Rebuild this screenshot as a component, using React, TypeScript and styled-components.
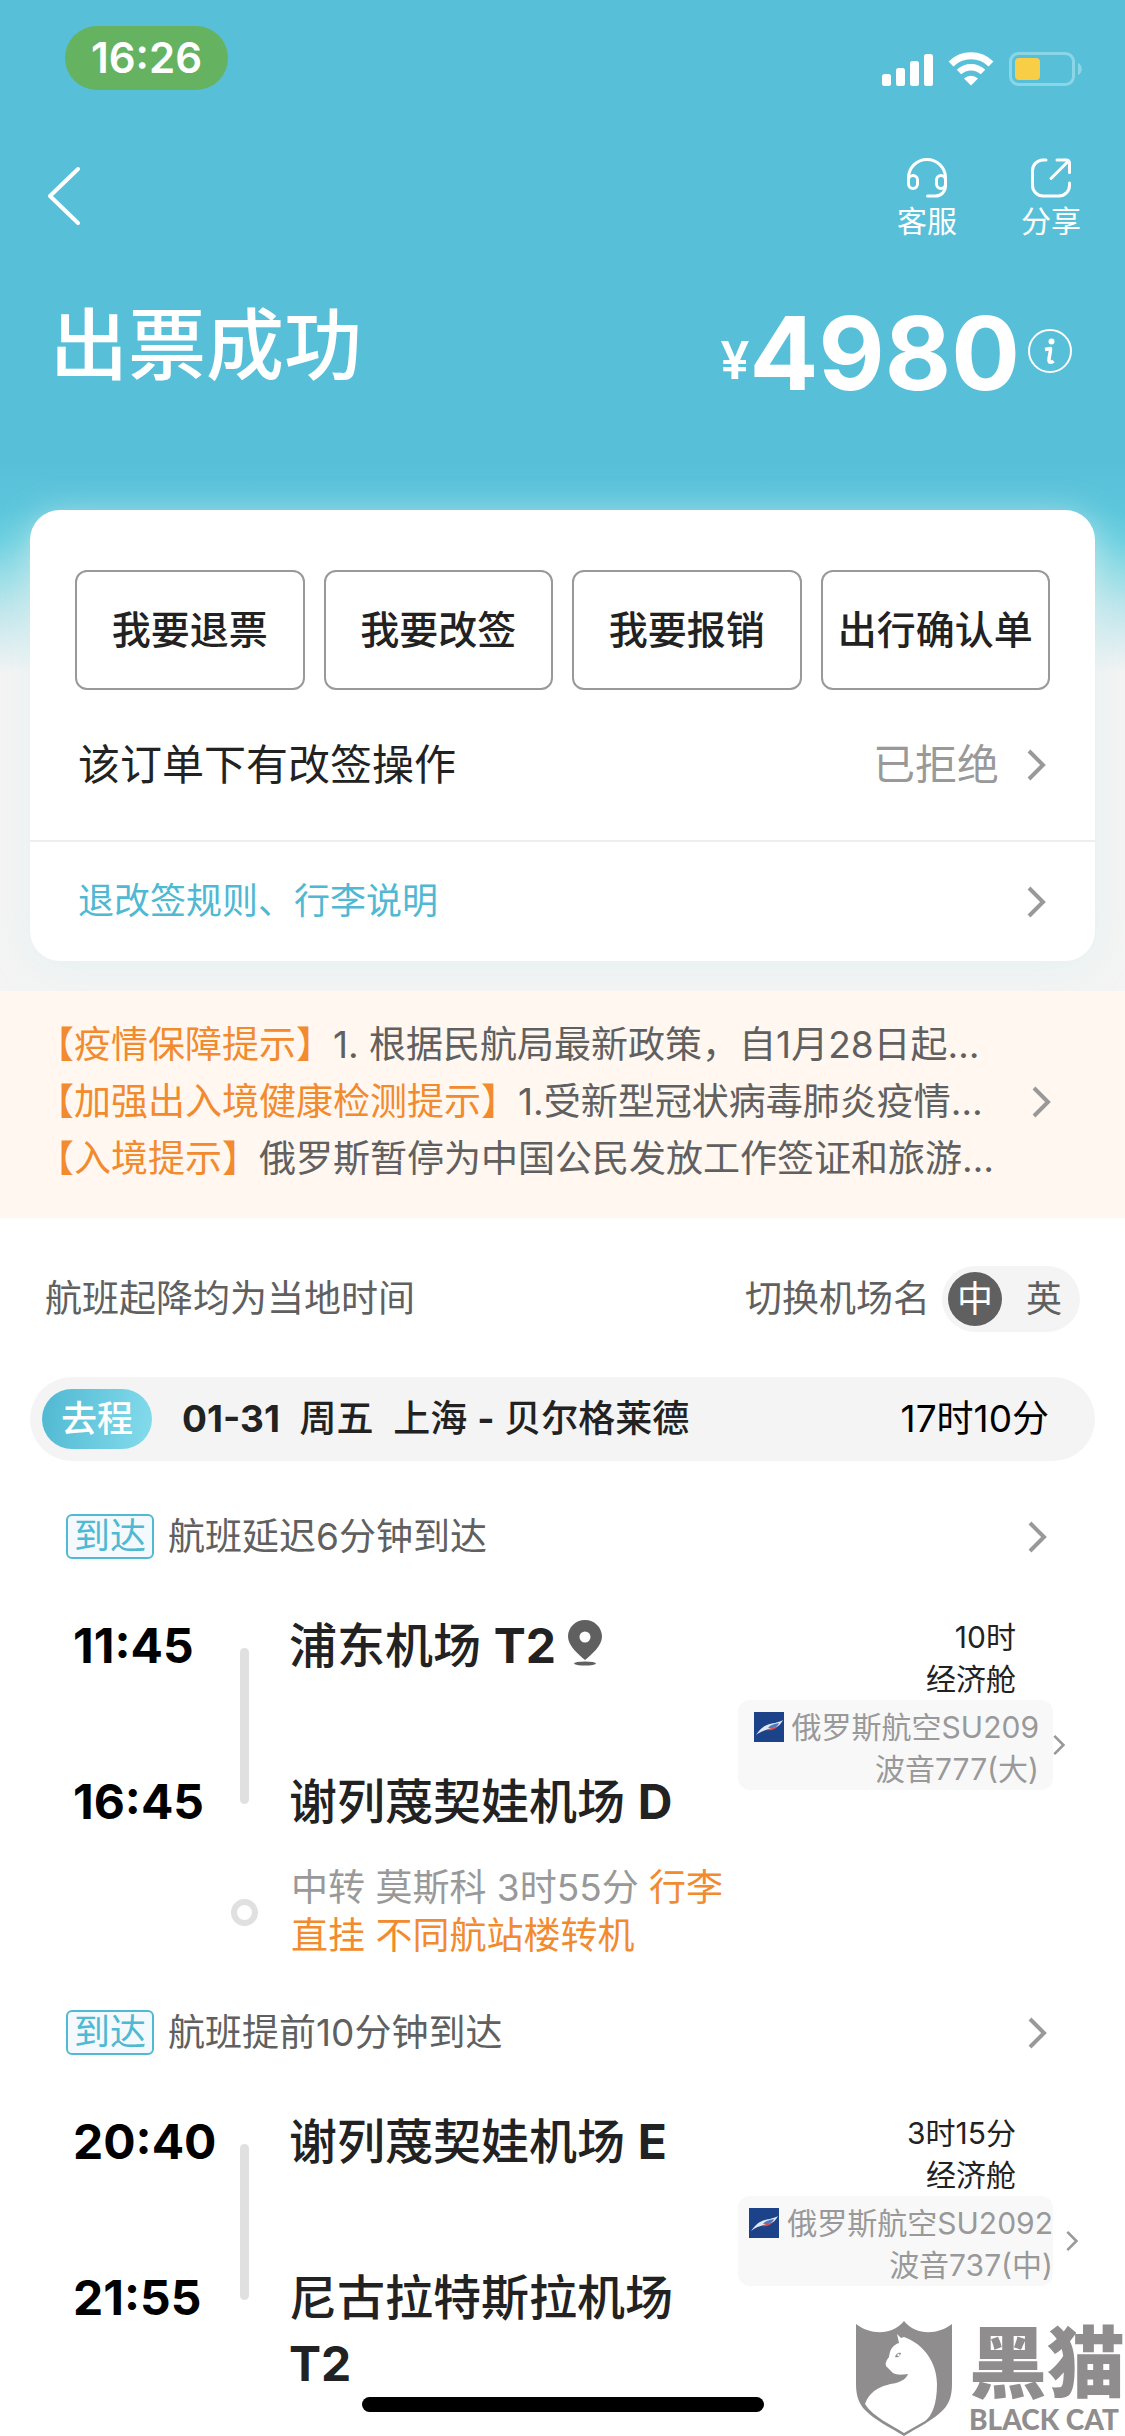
import React, { useState } from 'react';
import styled, { createGlobalStyle } from 'styled-components';

const GlobalStyle = createGlobalStyle`
  *, *::before, *::after { box-sizing: border-box; }
  body {
    margin: 0;
    background: #fff;
    font-family: Inter, "Noto Sans CJK SC", sans-serif;
    line-height: 1.4;
    color: #222;
  }
  h1, h2, p { margin: 0; }
  button {
    margin: 0;
    padding: 0;
    border: 0;
    background: none;
    font: inherit;
    color: inherit;
    text-align: inherit;
    cursor: pointer;
  }
  a { color: inherit; text-decoration: none; }
  svg { display: block; flex: none; }
`;

/* ---------- icons ---------- */

const ChevronSvg = styled.svg<{ $small?: boolean }>`
  width: ${p => (p.$small ? 13 : 20)}px;
  height: ${p => (p.$small ? 22 : 32)}px;
  fill: none;
  stroke: #999;
  stroke-width: 4;
`;

const Chevron = ({ small }: { small?: boolean }) => (
  <ChevronSvg $small={small} viewBox="0 0 20 32" aria-hidden="true">
    <path d="M2 2l14 14L2 30" />
  </ChevronSvg>
);

const SignalIcon = () => (
  <svg width="51" height="32" viewBox="0 0 51 32" fill="#fff" aria-hidden="true">
    <rect x="0" y="20" width="9" height="12" rx="2.5" />
    <rect x="14" y="14" width="9" height="18" rx="2.5" />
    <rect x="28" y="7" width="9" height="25" rx="2.5" />
    <rect x="42" y="0" width="9" height="32" rx="2.5" />
  </svg>
);

const WifiIcon = () => (
  <svg width="46" height="34" viewBox="0 0 46 34" fill="none" stroke="#fff" aria-hidden="true">
    <path d="M3 12a28.500 28.500 0 0 1 40 0" strokeWidth="7" />
    <path d="M11 20a17.500 17.500 0 0 1 24 0" strokeWidth="6.500" />
    <path d="M16 26.500a10 10 0 0 1 14 0L23 33.500z" fill="#fff" stroke="none" />
  </svg>
);

const BatteryIcon = () => (
  <svg width="74" height="34" viewBox="0 0 74 34" aria-hidden="true">
    <rect x="1.500" y="1.500" width="63" height="31" rx="8" fill="none" stroke="#8bd6e6" strokeWidth="3" />
    <path d="M69 11c5 2 5 10 0 12z" fill="#8bd6e6" />
    <rect x="6" y="6" width="25" height="22" rx="4" fill="#f7ce46" />
  </svg>
);

const BackIcon = () => (
  <svg width="36" height="60" viewBox="0 0 36 60" fill="none" stroke="#fff" strokeWidth="4" strokeLinecap="round" strokeLinejoin="round" aria-hidden="true">
    <path d="M32 3L4 30l28 27" />
  </svg>
);

const HeadsetIcon = () => (
  <svg width="40" height="40" viewBox="0 0 40 40" fill="none" stroke="#fff" strokeWidth="3" strokeLinecap="round" aria-hidden="true">
    <path d="M1.500 24v-4a18.500 18.500 0 0 1 37 0v8a10 10 0 0 1-10 10h-8" />
    <rect x="1.500" y="17.500" width="9" height="13" rx="4.500" />
    <rect x="29.500" y="17.500" width="9" height="13" rx="4.500" />
  </svg>
);

const ShareIcon = () => (
  <svg width="40" height="40" viewBox="0 0 40 40" fill="none" stroke="#fff" strokeWidth="3" strokeLinecap="round" strokeLinejoin="round" aria-hidden="true">
    <path d="M15 2h-3A10.500 10.500 0 0 0 1.500 12.500v15A10.500 10.500 0 0 0 12 38h16a10.500 10.500 0 0 0 10.500-10.500V25" />
    <path d="M26 2h9.500a3 3 0 0 1 3 3v9.500M37 3.500L20 20.500" />
  </svg>
);

const InfoIcon = () => (
  <svg width="44" height="44" viewBox="0 0 44 44" fill="none" stroke="#fff" aria-hidden="true">
    <circle cx="22" cy="22" r="21" strokeWidth="2" />
    <circle cx="23.500" cy="12.500" r="3" fill="#fff" stroke="none" />
    <path d="M17 20.500l5.500-1c.5 3-2 9-1.500 12.500.5 2 3 1.500 4.500 0" strokeWidth="3.500" strokeLinejoin="round" />
  </svg>
);

const PinIcon = () => (
  <svg width="34" height="46" viewBox="0 0 34 46" fill="#606060" aria-hidden="true">
    <path fillRule="evenodd" d="M17 0C7.500 0 0 7.500 0 16.500 0 26 11 35 17 40c6-5 17-14 17-23.500C34 7.500 26.500 0 17 0zm0 11.500a5.500 5.500 0 1 1 0 11 5.500 5.500 0 0 1 0-11z" />
    <ellipse cx="17" cy="43.500" rx="11" ry="2" />
  </svg>
);

const AirlineLogo = () => (
  <svg width="30" height="30" viewBox="0 0 30 30" aria-hidden="true">
    <rect width="30" height="30" fill="#1c4389" />
    <path d="M2 23c3-4 6-8 11-10s11-2 16-5c-2 4-5 7-9 8-6 2-12 2-18 7z" fill="#dfe7f1" />
    <path d="M14 16c2-3 6-4 11-5-1 3-3 4-6 5z" fill="#4b7cc0" />
    <path d="M12 18c4-2 8-2 12-4-2 3-6 5-12 4z" fill="#dd4a45" />
  </svg>
);

const ShieldIcon = () => (
  <svg width="98" height="115" viewBox="0 0 98 115" aria-hidden="true">
    <path d="M1 3c14 11 36 12 48-3 12 15 34 14 48 3v60c0 12-3 20-9 26-8 9-26 18-39 26-13-8-31-17-39-26-6-6-9-14-9-26z" fill="#8f8d8e" />
    <path d="M42 13l4 4 3-1c20 7 33 26 33 47 0 20-5 32-12 37L49 112C37 104 18 96 10 83c6-16 20-19 31-21 6-2 10-4 12-9-7 1-11 1-15-1l-7-7c-1-4 1-6 3-9 1-8 4-12 10-14z" fill="#fff" />
    <path d="M40 36c1-3 3-5 6-4-1 3-2 5-6 4z" fill="#8f8d8e" />
    <circle cx="43.500" cy="34" r="1.200" fill="#fff" />
  </svg>
);

/* ---------- page ---------- */

const Page = styled.div`
  position: relative;
  min-height: 100vh;
  overflow: hidden;
`;

const Hero = styled.header`
  padding: 26px 30px 30px;
  background: linear-gradient(#58bfd9 0, #58bfd9 460px, #5cc6dc 510px, #6cd0e0 540px, #94dce6 573px, #bce6ec 607px, #d9edf1 640px, #f4f4f4 673px);
`;

const StatusBar = styled.div`
  display: flex;
  justify-content: space-between;
  padding: 0 12px 0 35px;
`;

const ClockPill = styled.time`
  width: 163px;
  border-radius: 32px;
  background: #65b360;
  color: #fff;
  font-size: 42px;
  font-weight: 600;
  line-height: 64px;
  text-align: center;
`;

const StatusIcons = styled.div`
  display: flex;
  align-items: flex-end;
  gap: 15px;
  padding-bottom: 4px;
`;

const NavBar = styled.nav`
  display: flex;
  align-items: flex-start;
  justify-content: space-between;
  padding: 68px 14px 0 16px;
`;

const BackButton = styled.button`
  margin-top: 8px;
`;

const NavActions = styled.div`
  display: flex;
  gap: 64px;
`;

const NavAction = styled.button`
  display: flex;
  flex-direction: column;
  align-items: center;
  gap: 2px;
  color: #fff;
  font-size: 30px;
  line-height: 42px;
`;

const Summary = styled.div`
  display: flex;
  align-items: center;
  justify-content: space-between;
  height: 120px;
  margin: 44px 23px 104px 20px;
  color: #fff;
`;

const Title = styled.h1`
  font-size: 78px;
  font-weight: 500;
  line-height: 112px;
`;

const Price = styled.div`
  display: flex;
  align-items: flex-end;
  padding-top: 14px;
  font-weight: 700;
  font-size: 102px;
  line-height: 120px;
`;

const Currency = styled.span`
  margin-bottom: 27px;
  font-size: 52px;
  font-weight: 600;
  line-height: 50px;
`;

const InfoButton = styled.button`
  align-self: center;
  margin: 0 0 4px 8px;
`;

const Card = styled.section`
  border-radius: 30px;
  background: #fff;
  box-shadow: 0 6px 36px rgba(222, 240, 240, 0.7);
`;

const ActionGrid = styled.div`
  display: grid;
  grid-template-columns: repeat(4, 1fr);
  gap: 19px;
  padding: 60px 45px 0;
`;

const ActionButton = styled.button`
  height: 120px;
  border: 2px solid #999;
  border-radius: 12px;
  font-size: 39px;
  font-weight: 500;
  text-align: center;
  white-space: nowrap;
`;

const CardRow = styled.a<{ $accent?: boolean }>`
  display: flex;
  align-items: center;
  justify-content: space-between;
  height: ${p => (p.$accent ? 121 : 150)}px;
  padding: 0 48px;
  border-top: ${p => (p.$accent ? '2px solid #eee' : '0')};
  color: ${p => (p.$accent ? '#4fb8d3' : '#222')};
  font-size: ${p => (p.$accent ? 36 : 42)}px;
`;

const RowResult = styled.span`
  display: flex;
  align-items: center;
  gap: 28px;
  color: #999;
`;

const Notice = styled.a`
  display: flex;
  align-items: center;
  justify-content: space-between;
  padding: 25px 73px 31px 37px;
  background: #fff7f0;
`;

const NoticeLines = styled.div`
  min-width: 0;
  font-size: 37px;
  line-height: 57px;
  color: #606060;
`;

const NoticeLine = styled.p`
  overflow: hidden;
  white-space: nowrap;
  text-overflow: ellipsis;
`;

const Orange = styled.span`
  color: #f28a2e;
`;

const Itinerary = styled.main`
  padding-bottom: 39px;
`;

const LocaleRow = styled.div`
  display: flex;
  align-items: center;
  justify-content: space-between;
  padding: 48px 45px 45px;
  color: #606060;
  font-size: 37px;
`;

const LocaleSwitch = styled.div`
  display: flex;
  align-items: center;
  gap: 12px;
`;

const Toggle = styled.div`
  display: flex;
  justify-content: space-between;
  width: 138px;
  padding: 6px 9px 6px 6px;
  border-radius: 33px;
  background: #f4f4f4;
`;

const ToggleOption = styled.button<{ $active: boolean }>`
  width: 54px;
  height: 54px;
  border-radius: 50%;
  background: ${p => (p.$active ? '#606060' : 'transparent')};
  color: ${p => (p.$active ? '#fff' : '#606060')};
  font-size: 36px;
  line-height: 52px;
  text-align: center;
`;

const JourneyBar = styled.h2`
  display: flex;
  align-items: center;
  height: 84px;
  margin: 0 30px 53px;
  padding: 0 46px 0 12px;
  border-radius: 42px;
  background: #f4f4f4;
  font-size: 37px;
  font-weight: 500;
  white-space: pre;

  b { font-weight: 700; }
`;

const JourneyTag = styled.span`
  width: 110px;
  margin-right: 30px;
  border-radius: 30px;
  background: linear-gradient(100deg, #50b8d2, #84dcec);
  color: #fff;
  font-size: 36px;
  line-height: 60px;
  text-align: center;
`;

const JourneyDuration = styled.span`
  margin-left: auto;
  color: #000;
  font-weight: 400;
`;

const FlightStatus = styled.a`
  display: flex;
  align-items: center;
  padding: 0 77px 0 66px;
  color: #606060;
  font-size: 37px;
  line-height: 45px;

  svg { margin-left: auto; }
`;

const StatusTag = styled.span`
  width: 88px;
  height: 45px;
  margin-right: 14px;
  border: 2px solid #51b9d3;
  border-radius: 6px;
  background: #f3f9fc;
  color: #4fb8d3;
  font-size: 36px;
  line-height: 41px;
  text-align: center;
`;

const Leg = styled.div`
  display: grid;
  grid-template-columns: 167px 49px minmax(0, 1fr) 387px;
  grid-template-rows: 156px auto;
  margin-top: 54px;
  padding-left: 73px;
`;

const StopTime = styled.time<{ $row: number }>`
  grid-area: ${p => p.$row} / 1;
  color: #000;
  font-size: 48px;
  font-weight: 700;
  line-height: 66px;
`;

const Rail = styled.div`
  grid-area: 1 / 2 / 3 / 3;
  width: 9px;
  height: 156px;
  margin-top: 35px;
  border-radius: 5px;
  background: #e0e0e0;
`;

const StopName = styled.div<{ $row: number }>`
  grid-area: ${p => p.$row} / 3;
  display: flex;
  align-items: flex-start;
  gap: 12px;
  padding-right: 18px;
  font-size: 48px;
  font-weight: 500;
  line-height: 66px;

  b { font-weight: 700; }
  svg { margin-top: 7px; }
`;

const FlightInfo = styled.div`
  grid-area: 1 / 4 / 3 / 5;
  padding-top: 3px;
  line-height: 42px;
`;

const CabinLine = styled.p`
  padding-right: 109px;
  font-size: 30px;
  text-align: right;
`;

const Carrier = styled.button`
  display: flex;
  align-items: center;
`;

const CarrierPanel = styled.span<{ $wide: boolean }>`
  display: flex;
  flex-direction: column;
  align-items: flex-end;
  width: 315px;
  height: 90px;
  margin-right: ${p => (p.$wide ? 13 : 0)}px;
  padding: 6px ${p => (p.$wide ? 0 : 14)}px 0 0;
  border-radius: 12px;
  background: #f8f8f8;
  color: #999;
  font-size: 30px;
  white-space: nowrap;
`;

const CarrierName = styled.span`
  display: flex;
  align-items: center;
  gap: 8px;
`;

const Transfer = styled.div`
  display: flex;
  align-items: center;
  margin: 29px 0 50px;
  padding: 0 390px 0 231px;
`;

const Ring = styled.span`
  flex: none;
  width: 27px;
  height: 27px;
  margin-right: 33px;
  border: 6px solid #e0e0e0;
  border-radius: 50%;
`;

const TransferText = styled.p`
  color: #999;
  font-size: 37px;
  line-height: 48px;
`;

const HomeIndicator = styled.div`
  position: absolute;
  bottom: 24px;
  left: 50%;
  width: 402px;
  height: 15px;
  border-radius: 8px;
  background: #000;
  transform: translateX(-50%);
`;

const Watermark = styled.div`
  position: absolute;
  right: 0;
  bottom: 0;
  display: flex;
  align-items: flex-end;
  gap: 16px;
  color: #8f8d8e;
`;

const WatermarkText = styled.div`
  font-weight: 900;
  white-space: nowrap;
`;

const WatermarkName = styled.div`
  font-size: 78px;
  line-height: 76px;
`;

const WatermarkLatin = styled.div`
  font-family: Lato, sans-serif;
  font-size: 28px;
  line-height: 34px;
`;

/* ---------- data ---------- */

interface Flight {
  status: string;
  depart: string;
  arrive: string;
  from: string;
  fromGate: string;
  pin?: boolean;
  to: string;
  toGate: string;
  duration: string;
  carrier: string;
  plane: string;
  wide: boolean;
}

const flights: Flight[] = [
  {
    status: '航班延迟6分钟到达', depart: '11:45', arrive: '16:45',
    from: '浦东机场', fromGate: 'T2', pin: true, to: '谢列蔑契娃机场', toGate: 'D',
    duration: '10时', carrier: '俄罗斯航空SU209', plane: '波音777(大)', wide: false,
  },
  {
    status: '航班提前10分钟到达', depart: '20:40', arrive: '21:55',
    from: '谢列蔑契娃机场', fromGate: 'E', to: '尼古拉特斯拉机场', toGate: 'T2',
    duration: '3时15分', carrier: '俄罗斯航空SU2092', plane: '波音737(中)', wide: true,
  },
];

const notices = [
  ['【疫情保障提示】', '1. 根据民航局最新政策，自1月28日起…'],
  ['【加强出入境健康检测提示】', '1.受新型冠状病毒肺炎疫情…'],
  ['【入境提示】', '俄罗斯暂停为中国公民发放工作签证和旅游…'],
];

const FlightLeg = ({ flight }: { flight: Flight }) => (
  <section>
    <FlightStatus href="#status">
      <StatusTag>到达</StatusTag>
      {flight.status}
      <Chevron />
    </FlightStatus>
    <Leg>
      <StopTime $row={1}>{flight.depart}</StopTime>
      <StopTime $row={2}>{flight.arrive}</StopTime>
      <Rail />
      <StopName $row={1}>
        <span>{flight.from} <b>{flight.fromGate}</b></span>
        {flight.pin && <PinIcon />}
      </StopName>
      <StopName $row={2}>
        <span>{flight.to} <b>{flight.toGate}</b></span>
      </StopName>
      <FlightInfo>
        <CabinLine>{flight.duration}</CabinLine>
        <CabinLine>经济舱</CabinLine>
        <Carrier type="button">
          <CarrierPanel $wide={flight.wide}>
            <CarrierName><AirlineLogo />{flight.carrier}</CarrierName>
            <span>{flight.plane}</span>
          </CarrierPanel>
          <Chevron small />
        </Carrier>
      </FlightInfo>
    </Leg>
  </section>
);

export default function App() {
  const [locale, setLocale] = useState('中');

  return (
    <Page lang="zh-CN">
      <GlobalStyle />
      <Hero>
        <StatusBar>
          <ClockPill>16:26</ClockPill>
          <StatusIcons>
            <SignalIcon />
            <WifiIcon />
            <BatteryIcon />
          </StatusIcons>
        </StatusBar>
        <NavBar>
          <BackButton type="button" aria-label="返回"><BackIcon /></BackButton>
          <NavActions>
            <NavAction type="button"><HeadsetIcon />客服</NavAction>
            <NavAction type="button"><ShareIcon />分享</NavAction>
          </NavActions>
        </NavBar>
        <Summary>
          <Title>出票成功</Title>
          <Price>
            <Currency>¥</Currency>4980
            <InfoButton type="button" aria-label="价格明细"><InfoIcon /></InfoButton>
          </Price>
        </Summary>
        <Card>
          <ActionGrid>
            {['我要退票', '我要改签', '我要报销', '出行确认单'].map(label => (
              <ActionButton key={label} type="button">{label}</ActionButton>
            ))}
          </ActionGrid>
          <CardRow href="#change">
            该订单下有改签操作
            <RowResult>已拒绝<Chevron /></RowResult>
          </CardRow>
          <CardRow href="#rules" $accent>
            退改签规则、行李说明
            <Chevron />
          </CardRow>
        </Card>
      </Hero>

      <Notice href="#notice">
        <NoticeLines>
          {notices.map(([tag, text]) => (
            <NoticeLine key={tag}><Orange>{tag}</Orange>{text}</NoticeLine>
          ))}
        </NoticeLines>
        <Chevron />
      </Notice>

      <Itinerary>
        <LocaleRow>
          <span>航班起降均为当地时间</span>
          <LocaleSwitch>
            切换机场名
            <Toggle>
              {['中', '英'].map(name => (
                <ToggleOption key={name} type="button" $active={locale === name} onClick={() => setLocale(name)}>
                  {name}
                </ToggleOption>
              ))}
            </Toggle>
          </LocaleSwitch>
        </LocaleRow>
        <JourneyBar>
          <JourneyTag>去程</JourneyTag>
          <span><b>01-31</b>  周五  上海 <b>-</b> 贝尔格莱德</span>
          <JourneyDuration>17时10分</JourneyDuration>
        </JourneyBar>
        <FlightLeg flight={flights[0]} />
        <Transfer>
          <Ring />
          <TransferText>
            中转 莫斯科 3时55分 <Orange>行李直挂 不同航站楼转机</Orange>
          </TransferText>
        </Transfer>
        <FlightLeg flight={flights[1]} />
      </Itinerary>

      <HomeIndicator />
      <Watermark>
        <ShieldIcon />
        <WatermarkText>
          <WatermarkName>黑猫</WatermarkName>
          <WatermarkLatin>BLACK CAT</WatermarkLatin>
        </WatermarkText>
      </Watermark>
    </Page>
  );
}
